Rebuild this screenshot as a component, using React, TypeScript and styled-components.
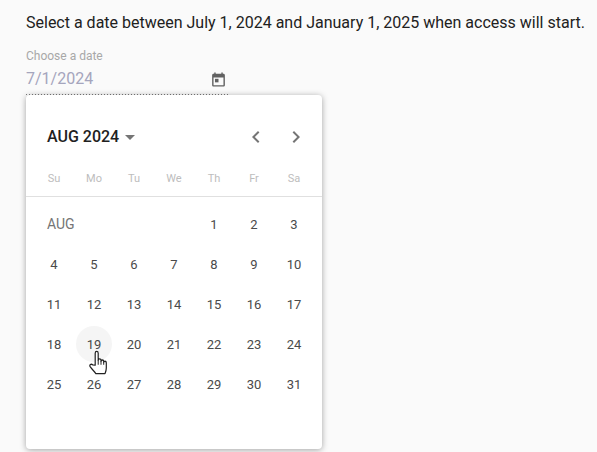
import styled, { createGlobalStyle } from "styled-components";

const weekdays = ["Su", "Mo", "Tu", "We", "Th", "Fr", "Sa"];
const weeks: (number | null)[][] = [
    [null, null, null, null, 1, 2, 3],
    [4, 5, 6, 7, 8, 9, 10],
    [11, 12, 13, 14, 15, 16, 17],
    [18, 19, 20, 21, 22, 23, 24],
    [25, 26, 27, 28, 29, 30, 31],
];

const CalendarIcon = () => (
    <svg width="17" height="17" viewBox="0 0 24 24" fill="#616161">
        <path d="M19 4h-1V2h-2v2H8V2H6v2H5c-1.1 0-2 .9-2 2v14c0 1.1.9 2 2 2h14c1.1 0 2-.9 2-2V6c0-1.100-.9-2-2-2zm0 16H5V9h14v11z" />
        <path d="M7 11h5v5H7z" />
    </svg>
);

const Chevron = ({ flip }: { flip?: boolean }) => (
    <svg width="24" height="24" viewBox="0 0 24 24" fill="#757575">
        <path d={flip ? "M10 6 8.590 7.410 13.170 12l-4.580 4.590L10 18l6-6z" : "M15.410 7.410 14 6l-6 6 6 6 1.410-1.410L10.830 12z"} />
    </svg>
);

const HandCursor = () => (
    <svg width="19" height="26" viewBox="0 0 19 24" preserveAspectRatio="none">
        <path
            d="M6.200 14V3c0-2.200 3-2.200 3 0v6.500c0-1.800 2.800-1.800 2.800 0v1c0-1.700 2.700-1.700 2.700 0v1c0-1.500 2.600-1.500 2.600.2v4.800c0 2.200-.5 3.300-1.300 5.300H6.800C5.500 20 3.500 18.300 1.300 15.600c-1.300-1.700.8-3.300 2.300-1.900z"
            fill="#fff"
            stroke="#222"
            strokeWidth="1.200"
            strokeLinejoin="round"
        />
        <path d="M9.200 9.500v4M12 10.500v3M14.700 11.500v2" stroke="#222" strokeWidth="1" fill="none" />
    </svg>
);

export default function App() {
    return (
        <Page>
            <GlobalStyle />
            <Intro>Select a date between July 1, 2024 and January 1, 2025 when access will start.</Intro>
            <Field>
                <FieldLabel>Choose a date</FieldLabel>
                <FieldRow>
                    <FieldValue>7/1/2024</FieldValue>
                    <FieldIcon><CalendarIcon /></FieldIcon>
                </FieldRow>
            </Field>
            <Picker>
                <PickerHeader>
                    <MonthButton>
                        AUG 2024
                        <Caret />
                    </MonthButton>
                    <NavButtons>
                        <NavButton><Chevron /></NavButton>
                        <NavButton><Chevron flip /></NavButton>
                    </NavButtons>
                </PickerHeader>
                <WeekdayRow>
                    {weekdays.map(d => <Weekday key={d}>{d}</Weekday>)}
                </WeekdayRow>
                <Divider />
                <DayGrid>
                    {weeks.flat().map((d, i) => {
                        if (i === 0) return <MonthTag key={i}>AUG</MonthTag>;
                        if (d === null) {
                            return i < 3 ? null : <Day key={i} />;
                        }
                        return (
                            <Day key={i}>
                                <DayCircle $hover={d === 19}>{d}</DayCircle>
                                {d === 19 && <CursorSpot><HandCursor /></CursorSpot>}
                            </Day>
                        );
                    })}
                </DayGrid>
            </Picker>
        </Page>
    );
}

const GlobalStyle = createGlobalStyle`
    html, body {
        margin: 0;
        padding: 0;
        background: #fafafa;
        overflow: hidden;
    }
`;

const Page = styled.div`
    box-sizing: border-box;
    width: 597px;
    height: 452px;
    padding: 13px 0 0 26px;
    background: #fafafa;
    font-family: Roboto, "Liberation Sans", sans-serif;
    overflow: hidden;
`;

const Intro = styled.div`
    font-size: 16px;
    line-height: 19px;
    color: #212121;
    white-space: nowrap;
`;

const Field = styled.div`
    box-sizing: border-box;
    width: 202px;
    height: 46px;
    margin-top: 17px;
    background-image: linear-gradient(to right, rgba(0, 0, 0, 0.5) 33%, transparent 0);
    background-position: left bottom;
    background-size: 3px 1px;
    background-repeat: repeat-x;
`;

const FieldLabel = styled.div`
    font-size: 12px;
    line-height: 14px;
    color: #a8a8a8;
`;

const FieldRow = styled.div`
    display: flex;
    align-items: center;
    justify-content: space-between;
    height: 24px;
    margin-top: 3px;
`;

const FieldValue = styled.div`
    font-size: 16px;
    line-height: 19px;
    color: #a5a5bd;
`;

const FieldIcon = styled.div`
    display: flex;
    margin: 2px 1px 0 0;
`;

const Picker = styled.div`
    box-sizing: border-box;
    width: 296px;
    height: 354px;
    padding: 0 8px;
    background: #fff;
    border-radius: 4px;
    box-shadow: 0 1px 6px rgba(0, 0, 0, 0.35);
`;

const PickerHeader = styled.div`
    display: flex;
    align-items: center;
    justify-content: space-between;
    height: 24px;
    padding: 30px 6px 0 13px;
`;

const MonthButton = styled.div`
    display: flex;
    align-items: center;
    gap: 6px;
    padding-bottom: 2px;
    font-size: 16px;
    font-weight: 500;
    color: #212121;
`;

const Caret = styled.span`
    width: 0;
    height: 0;
    margin-top: 3px;
    border-left: 5px solid transparent;
    border-right: 5px solid transparent;
    border-top: 5px solid #757575;
`;

const NavButtons = styled.div`
    display: flex;
    gap: 16px;
`;

const NavButton = styled.div`
    display: flex;
    width: 24px;
    height: 24px;
`;

const WeekdayRow = styled.div`
    display: grid;
    grid-template-columns: repeat(7, 40px);
    margin-top: 23px;
`;

const Weekday = styled.div`
    text-align: center;
    font-size: 11px;
    line-height: 14px;
    color: #bdbdbd;
`;

const Divider = styled.div`
    height: 1px;
    margin: 10px -8px 0;
    background: #e0e0e0;
`;

const DayGrid = styled.div`
    display: grid;
    grid-template-columns: repeat(7, 40px);
    grid-auto-rows: 40px;
    margin-top: 7px;
`;

const MonthTag = styled.div`
    grid-column: span 3;
    display: flex;
    align-items: center;
    padding-left: 13px;
    font-size: 14px;
    color: #757575;
`;

const Day = styled.div`
    position: relative;
    display: flex;
    align-items: center;
    justify-content: center;
`;

const DayCircle = styled.div<{ $hover?: boolean }>`
    display: flex;
    align-items: center;
    justify-content: center;
    width: 36px;
    height: 36px;
    border-radius: 50%;
    font-size: 13px;
    color: #4a4a4a;
    background: ${p => (p.$hover ? "#f5f5f5" : "transparent")};
`;

const CursorSpot = styled.div`
    position: absolute;
    left: 15px;
    top: 26px;
    display: flex;
`;
